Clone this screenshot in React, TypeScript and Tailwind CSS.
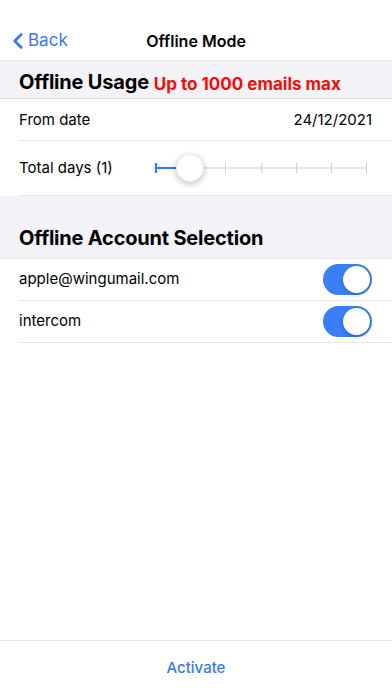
import { ChevronLeft } from 'lucide-react'

const ticks = [0, 1, 2, 3, 4, 5, 6]

function Toggle() {
  return (
    <div className="w-[49px] h-[31px] rounded-full bg-[#3a7ff6] p-[2px] flex justify-end">
      <div className="w-[27px] h-[27px] rounded-full bg-white shadow-[0_2px_4px_rgba(0,0,0,0.2)]" />
    </div>
  )
}

function Slider() {
  return (
    <div className="relative w-[212px] h-[30px]">
      <div className="absolute left-0 right-0 top-[14px] h-[2px] bg-[#e5e5ea]" />
      <div className="absolute left-0 w-[30px] top-[14px] h-[2px] bg-[#3478f6]" />
      {ticks.map((t) => (
        <div
          key={t}
          className={t === 0 ? 'absolute top-[10px] w-[2px] h-[10px] bg-[#3478f6]' : 'absolute top-[10px] w-[1px] h-[10px] bg-[#d1d1d6]'}
          style={{ left: `${(t / 6) * 211}px` }}
        />
      ))}
      <div className="absolute left-[21px] top-[1px] w-[28px] h-[28px] rounded-full bg-white shadow-[0_2px_6px_rgba(0,0,0,0.25)] border border-[#ececec]" />
    </div>
  )
}

export default function App() {
  return (
    <div className="w-[392px] h-[696px] bg-white flex flex-col font-['Inter',sans-serif] text-black">
      <div className="h-[60px] flex items-end pb-[4px] relative">
        <div className="flex items-center text-[#3478f6] pl-[5px]">
          <ChevronLeft className="w-[26px] h-[30px]" strokeWidth={2.4} />
          <span className="text-[17px] -ml-[3px]">Back</span>
        </div>
        <div className="absolute left-0 right-0 bottom-[7px] text-center text-[16px] font-semibold leading-[24px]">
          Offline Mode
        </div>
      </div>

      <div className="bg-[#f2f2f7] h-[39px] flex items-end pl-[19px] pb-[2px] border-t border-[#e8e8ec] border-b border-b-[#dcdce0]">
        <span className="text-[20px] font-bold leading-[28px] tracking-[-0.2px]">Offline Usage</span>
        <span className="text-[17px] font-bold text-[#f20d0d] ml-[5px] leading-[24px]">Up to 1000 emails max</span>
      </div>

      <div className="pl-[19px]">
        <div className="h-[42px] flex items-center justify-between pr-[20px] pt-[2px] border-b border-[#e5e5ea] text-[15px]">
          <span>From date</span>
          <span>24/12/2021</span>
        </div>
        <div className="h-[55px] flex items-center border-b border-[#e5e5ea] text-[15px]">
          <span className="w-[136px]">Total days (1)</span>
          <Slider />
        </div>
      </div>

      <div className="bg-[#f2f2f7] h-[63px] flex items-end pl-[19px] pb-[6px] border-b border-[#e5e5ea]">
        <span className="text-[20px] font-bold leading-[28px] tracking-[-0.2px]">Offline Account Selection</span>
      </div>

      <div className="pl-[19px]">
        {['apple@wingumail.com', 'intercom'].map((name) => (
          <div key={name} className="h-[42px] flex items-center justify-between pr-[20px] border-b border-[#e5e5ea] text-[15px]">
            <span>{name}</span>
            <Toggle />
          </div>
        ))}
      </div>

      <div className="flex-1" />

      <div className="h-[56px] border-t border-[#e5e5ea] flex items-center justify-center">
        <span className="text-[15px] text-[#3478f6] font-medium">Activate</span>
      </div>
    </div>
  )
}
